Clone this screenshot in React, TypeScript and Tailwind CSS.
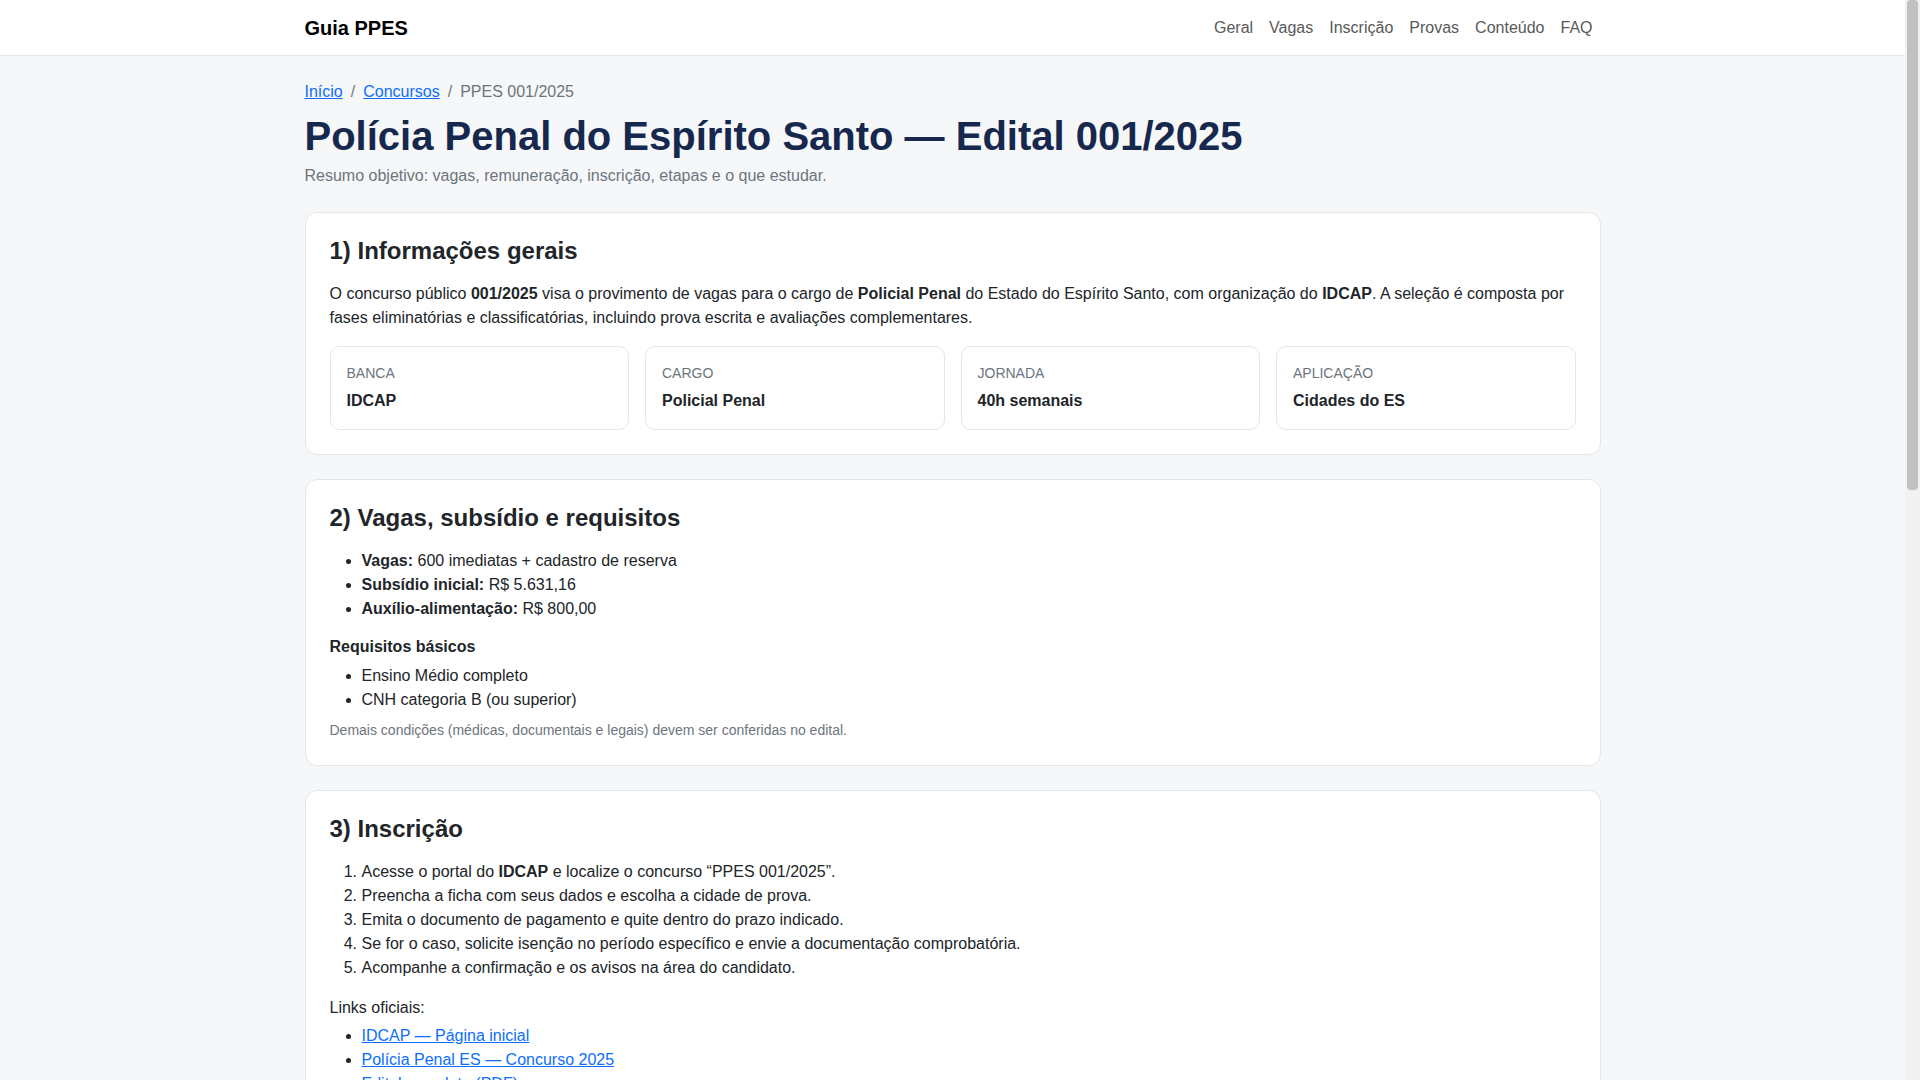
const navLinks = ["Geral", "Vagas", "Inscrição", "Provas", "Conteúdo", "FAQ"];

const infoBoxes = [
  { label: "Banca", value: "IDCAP" },
  { label: "Cargo", value: "Policial Penal" },
  { label: "Jornada", value: "40h semanais" },
  { label: "Aplicação", value: "Cidades do ES" },
];

const Card = ({ title, children }: { title: string; children: React.ReactNode }) => (
  <section className="mb-6 rounded-xl border border-[#e3e6ea] bg-white p-6">
    <h2 className="mb-4 text-2xl leading-[1.2] font-bold text-[#212529]">{title}</h2>
    {children}
  </section>
);

// the reference was taken with a classic 15px browser scrollbar on the right
const Scrollbar = () => (
  <div className="w-[15px] shrink-0 bg-[#f1f1f1] px-[2px]">
    <div className="h-[490px] rounded-[4px] bg-[#c1c1c1]" />
  </div>
);

export default function App() {
  return (
    <div className="flex h-screen overflow-hidden bg-[#f6f7f9] font-['Liberation_Sans',Arial,sans-serif] text-base leading-6 text-[#212529]">
      <div className="min-w-0 flex-1">
        <header className="border-b border-[#e3e6ea] bg-white">
          <div className="mx-auto flex h-[55px] max-w-[1320px] items-center justify-between px-3">
            <a href="#" className="text-xl font-bold text-black">
              Guia PPES
            </a>
            <nav className="flex">
              {navLinks.map((link) => (
                <a key={link} href="#" className="px-2 text-[#595959]">
                  {link}
                </a>
              ))}
            </nav>
          </div>
        </header>

        <main className="mx-auto max-w-[1320px] px-3 pt-6 pb-12">
          <nav className="mb-2 flex text-[#6c757d]">
            <a href="#" className="text-[#0d6efd] underline">
              Início
            </a>
            <span className="px-2">/</span>
            <a href="#" className="text-[#0d6efd] underline">
              Concursos
            </a>
            <span className="px-2">/</span>
            <span>PPES 001/2025</span>
          </nav>

          <h1 className="mb-1 text-[40px] leading-[1.2] font-bold text-[#16284d]">
            Polícia Penal do Espírito Santo — Edital 001/2025
          </h1>
          <p className="mb-6 text-[#6c757d]">
            Resumo objetivo: vagas, remuneração, inscrição, etapas e o que estudar.
          </p>

          <Card title="1) Informações gerais">
            <p className="mb-4">
              O concurso público <strong>001/2025</strong> visa o provimento de vagas para o cargo de{" "}
              <strong>Policial Penal</strong> do Estado do Espírito Santo, com organização do{" "}
              <strong>IDCAP</strong>. A seleção é composta por fases eliminatórias e classificatórias,
              incluindo prova escrita e avaliações complementares.
            </p>
            <div className="grid grid-cols-4 gap-4">
              {infoBoxes.map((box) => (
                <div key={box.label} className="rounded-[10px] border border-[#e3e6ea] bg-white p-4">
                  <div className="mb-[5px] text-sm leading-[21px] text-[#6c757d] uppercase">{box.label}</div>
                  <div className="font-bold">{box.value}</div>
                </div>
              ))}
            </div>
          </Card>

          <Card title="2) Vagas, subsídio e requisitos">
            <ul className="mb-4 list-disc pl-8">
              <li>
                <strong>Vagas:</strong> 600 imediatas + cadastro de reserva
              </li>
              <li>
                <strong>Subsídio inicial:</strong> R$ 5.631,16
              </li>
              <li>
                <strong>Auxílio-alimentação:</strong> R$ 800,00
              </li>
            </ul>
            <h3 className="mb-2 leading-[1.2] font-bold">Requisitos básicos</h3>
            <ul className="mb-2 list-disc pl-8">
              <li>Ensino Médio completo</li>
              <li>CNH categoria B (ou superior)</li>
            </ul>
            <p className="text-sm leading-[21px] text-[#6c757d]">
              Demais condições (médicas, documentais e legais) devem ser conferidas no edital.
            </p>
          </Card>

          <Card title="3) Inscrição">
            <ol className="mb-4 list-decimal pl-8">
              <li>
                Acesse o portal do <strong>IDCAP</strong> e localize o concurso “PPES 001/2025”.
              </li>
              <li>Preencha a ficha com seus dados e escolha a cidade de prova.</li>
              <li>Emita o documento de pagamento e quite dentro do prazo indicado.</li>
              <li>Se for o caso, solicite isenção no período específico e envie a documentação comprobatória.</li>
              <li>Acompanhe a confirmação e os avisos na área do candidato.</li>
            </ol>
            <p className="mb-1">Links oficiais:</p>
            <ul className="list-disc pl-8">
              <li>
                <a href="#" className="text-[#0d6efd] underline">
                  IDCAP — Página inicial
                </a>
              </li>
              <li>
                <a href="#" className="text-[#0d6efd] underline">
                  Polícia Penal ES — Concurso 2025
                </a>
              </li>
              <li>
                <a href="#" className="text-[#0d6efd] underline">
                  Edital completo (PDF)
                </a>
              </li>
            </ul>
          </Card>

          <Card title="4) Provas e etapas">
            <ul className="mb-2 list-disc pl-8">
              <li>Prova objetiva (eliminatória e classificatória)</li>
              <li>Teste de aptidão física</li>
              <li>Avaliação psicológica</li>
              <li>Investigação social</li>
              <li>Curso de formação</li>
            </ul>
            <p className="text-sm leading-[21px] text-[#6c757d]">
              Consulte o cronograma oficial para as datas de cada etapa.
            </p>
          </Card>

          <Card title="5) Conteúdo programático">
            <ul className="list-disc pl-8">
              <li>Língua Portuguesa</li>
              <li>Raciocínio Lógico</li>
              <li>Noções de Direito Constitucional e Administrativo</li>
              <li>Noções de Direito Penal e Processual Penal</li>
              <li>Legislação específica (Lei de Execução Penal)</li>
            </ul>
          </Card>

          <Card title="6) FAQ">
            <p className="mb-2 font-bold">Preciso ter CNH para me inscrever?</p>
            <p className="mb-4">A CNH categoria B é exigida no momento da posse, conforme o edital.</p>
            <p className="mb-2 font-bold">Onde serão aplicadas as provas?</p>
            <p>Em cidades do Espírito Santo indicadas no edital.</p>
          </Card>
        </main>
      </div>
      <Scrollbar />
    </div>
  );
}
